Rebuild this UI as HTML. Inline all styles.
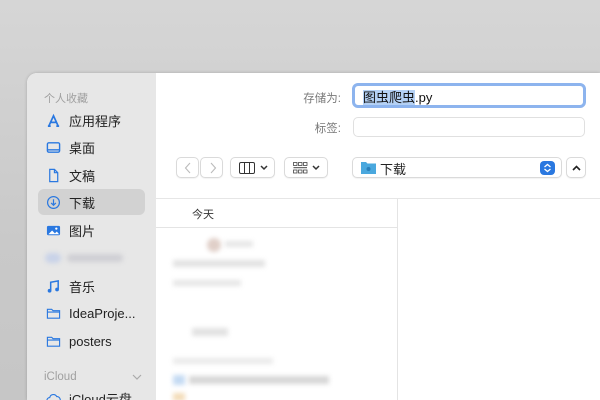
<!DOCTYPE html>
<html><head><meta charset="utf-8"><style>
*{margin:0;padding:0;box-sizing:border-box}
html,body{width:600px;height:400px;overflow:hidden}
body{background:linear-gradient(#d6d6d6,#c9c9c9 60%,#c6c6c6);font-family:"Liberation Sans","Noto Sans CJK SC",sans-serif;position:relative}
.win{position:absolute;left:27px;top:73px;width:573px;height:327px;background:#fff;border-radius:10px 0 0 0;overflow:hidden;box-shadow:0 0 3px rgba(0,0,0,.2)}
.side{position:absolute;left:0;top:0;width:129px;height:100%;background:#e7e7e7}
.abs{position:absolute}
.hd{font-size:11px;color:#a0a0a0}
.it{position:absolute;left:19px;font-size:13px;color:#222;display:flex;align-items:center;gap:8px;height:20px}
.ic{width:15px;height:15px;display:inline-block}
.sel{position:absolute;left:11px;top:116px;width:107px;height:26px;background:#d2d2d2;border-radius:6px}
.btn{position:absolute;top:84px;height:21px;border:1px solid #dadada;border-radius:5px;background:#fff;box-shadow:0 1px 1px rgba(0,0,0,.05)}
.lbl{position:absolute;font-size:11px;color:#7a7a7a;text-align:right}
.bl{position:absolute;filter:blur(2.5px)}
</style></head><body>
<div class="win">
<div class="side">
<div class="abs hd" style="left:17px;top:17px">个人收藏</div>
<div class="sel"></div>
<div class="it" style="top:37px"><svg class="ic" viewBox="0 0 16 16"><path d="M3 14L8 3l5 11M5 10h6M2 14h3M11 14h3" stroke="#2a78e0" stroke-width="1.8" fill="none"/></svg>应用程序</div>
<div class="it" style="top:64px"><svg class="ic" viewBox="0 0 16 16"><rect x="1.5" y="3" width="13" height="10" rx="1.5" stroke="#2a78e0" stroke-width="1.5" fill="none"/><path d="M2 10.5h12" stroke="#2a78e0" stroke-width="1.5"/></svg>桌面</div>
<div class="it" style="top:92px"><svg class="ic" viewBox="0 0 16 16"><path d="M4 1.5h5l3.5 3.5v9.5H4zM9 1.5V5h3.5" stroke="#2a78e0" stroke-width="1.3" fill="none"/></svg>文稿</div>
<div class="it" style="top:119px"><svg class="ic" viewBox="0 0 16 16"><circle cx="8" cy="8" r="6.3" stroke="#2a78e0" stroke-width="1.3" fill="none"/><path d="M8 4.5v6M5.5 8.5L8 11l2.5-2.5" stroke="#2a78e0" stroke-width="1.3" fill="none"/></svg>下载</div>
<div class="it" style="top:147px"><svg class="ic" viewBox="0 0 16 16"><rect x="1" y="3" width="14" height="10" rx="1.5" fill="#2a78e0"/><path d="M2.5 12l4-4 3 3 2-2 2.5 3z" fill="#fff"/><circle cx="11" cy="6" r="1.2" fill="#fff"/></svg>图片</div>
<div class="bl" style="left:18px;top:180px;width:16px;height:10px;border-radius:5px;background:#c8d2e8"></div>
<div class="bl" style="left:40px;top:181px;width:56px;height:8px;border-radius:4px;background:#cfcfd4"></div>
<div class="it" style="top:203px"><svg class="ic" viewBox="0 0 16 16"><path d="M5 12V3.5l8-1.5V11" stroke="#2a78e0" stroke-width="1.6" fill="none"/><circle cx="3.8" cy="12.5" r="2" fill="#2a78e0"/><circle cx="11.8" cy="11.2" r="2" fill="#2a78e0"/></svg>音乐</div>
<div class="it" style="top:230px"><svg class="ic" viewBox="0 0 16 16"><path d="M1.5 3.5h4.5l1.5 1.5h7v8h-13z M1.5 6.5h13" stroke="#2a78e0" stroke-width="1.2" fill="none"/></svg>IdeaProje...</div>
<div class="it" style="top:258px"><svg class="ic" viewBox="0 0 16 16"><path d="M1.5 3.5h4.5l1.5 1.5h7v8h-13z M1.5 6.5h13" stroke="#2a78e0" stroke-width="1.2" fill="none"/></svg>posters</div>
<div class="abs hd" style="left:17px;top:298px;font-size:11.5px">iCloud</div>
<svg class="abs" style="left:105px;top:301px" width="10" height="6" viewBox="0 0 10 6"><path d="M1 1l4 4 4-4" fill="none" stroke="#aaa" stroke-width="1.2"/></svg>
<div class="it" style="top:315px"><svg class="ic" viewBox="0 0 16 16"><path d="M4 13a3 3 0 010-6 4 4 0 017.5-1A3 3 0 0112 13z" stroke="#2a78e0" stroke-width="1.2" fill="none"/></svg>iCloud云盘</div>
</div>
<div class="lbl" style="left:250px;top:17px;width:64px;font-size:11.5px">存储为:</div>
<div class="abs" style="left:325px;top:10px;width:234px;height:25px;border:3px solid #8db4ee;border-radius:6px;background:#fff"></div>
<div class="abs" style="left:336px;top:14px;font-size:13px;color:#111"><span style="background:#b4d1f5">图虫爬虫</span>.py</div>
<div class="lbl" style="left:250px;top:47px;width:64px;font-size:11.5px">标签:</div>
<div class="abs" style="left:326px;top:44px;width:232px;height:20px;border:1px solid #e0e0e0;border-radius:5px"></div>
<div class="btn" style="left:149px;width:23px"><svg class="abs" style="left:7px;top:4px" width="8" height="12" viewBox="0 0 8 12"><path d="M6 1L1.5 6 6 11" fill="none" stroke="#bbb" stroke-width="1.1"/></svg></div>
<div class="btn" style="left:173px;width:23px"><svg class="abs" style="left:8px;top:4px" width="8" height="12" viewBox="0 0 8 12"><path d="M2 1l4.5 5L2 11" fill="none" stroke="#bbb" stroke-width="1.1"/></svg></div>
<div class="btn" style="left:203px;width:45px"><svg class="abs" style="left:8px;top:4px" width="30" height="12" viewBox="0 0 30 12"><rect x=".5" y=".5" width="15" height="11" rx="1.5" fill="none" stroke="#333"/><path d="M5.5 1v10M10.5 1v10" stroke="#333"/><path d="M22 4l3 3 3-3" fill="none" stroke="#333" stroke-width="1.5"/></svg></div>
<div class="btn" style="left:257px;width:44px"><svg class="abs" style="left:8px;top:4px" width="30" height="12" viewBox="0 0 30 12"><g fill="none" stroke="#444" stroke-width=".8"><rect x=".5" y=".5" width="3.5" height="3" /><rect x="5.5" y=".5" width="3.5" height="3"/><rect x="10.5" y=".5" width="3.5" height="3"/><rect x=".5" y="8" width="3.5" height="3"/><rect x="5.5" y="8" width="3.5" height="3"/><rect x="10.5" y="8" width="3.5" height="3"/></g><path d="M.5 5.7h13.5" stroke="#444"/><path d="M20 4l3 3 3-3" fill="none" stroke="#333" stroke-width="1.5"/></svg></div>
<div class="btn" style="left:325px;width:210px"><svg class="abs" style="left:8px;top:3px" width="15" height="13" viewBox="0 0 15 13"><path d="M0 1h5l1.5 1.5H15V13H0z" fill="#4aa8de"/><circle cx="7.5" cy="8" r="2" fill="#2a7fba"/></svg><span class="abs" style="left:27px;top:1px;font-size:13px;color:#222">下载</span><div class="abs" style="left:187px;top:3px;width:15px;height:14px;border-radius:4px;background:#2a78e0"><svg class="abs" style="left:3px;top:2px" width="9" height="10" viewBox="0 0 9 10"><path d="M1.5 4L4.5 1.5 7.5 4M1.5 6l3 2.5 3-2.5" fill="none" stroke="#fff" stroke-width="1.3"/></svg></div></div>
<div class="btn" style="left:539px;width:20px"><svg class="abs" style="left:5px;top:7px" width="9" height="6" viewBox="0 0 9 6"><path d="M1 5l3.5-3.5L8 5" fill="none" stroke="#222" stroke-width="1.6"/></svg></div>
<div class="abs" style="left:129px;top:125px;width:480px;height:1px;background:#e6e6e6"></div>
<div class="abs" style="left:370px;top:126px;width:1px;height:220px;background:#e4e4e4"></div>
<div class="abs" style="left:165px;top:133px;font-size:11px;color:#333">今天</div>
<div class="abs" style="left:129px;top:154px;width:241px;height:1px;background:#e4e4e4"></div>
<div class="bl" style="left:180px;top:165px;width:14px;height:14px;border-radius:7px;background:#e0cfc8"></div>
<div class="bl" style="left:198px;top:168px;width:28px;height:6px;background:#e6e6e6"></div>
<div class="bl" style="left:146px;top:187px;width:92px;height:7px;background:#e2e2e2"></div>
<div class="bl" style="left:146px;top:207px;width:68px;height:6px;background:#e6e6e6"></div>
<div class="bl" style="left:165px;top:255px;width:36px;height:8px;background:#e2e2e2"></div>
<div class="bl" style="left:146px;top:285px;width:100px;height:6px;background:#eaeaea"></div>
<div class="bl" style="left:146px;top:302px;width:12px;height:10px;background:#c4daf3"></div>
<div class="bl" style="left:162px;top:303px;width:140px;height:8px;background:#d6d6d6"></div>
<div class="bl" style="left:146px;top:320px;width:12px;height:8px;background:#f3dcb8"></div>
</div>
</body></html>
